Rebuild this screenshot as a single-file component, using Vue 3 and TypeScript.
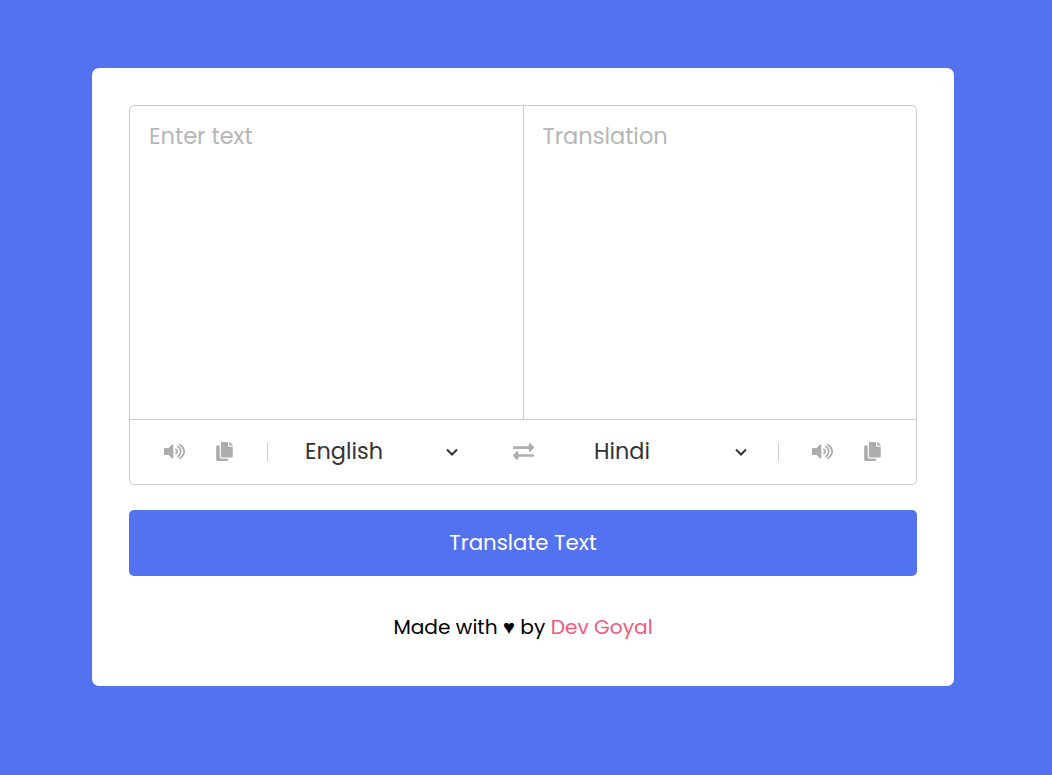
<template>
  <div class="page">
    <div class="card">
      <div class="box">
        <div class="panes">
          <div class="pane pane-left"><span class="placeholder">Enter text</span></div>
          <div class="pane"><span class="placeholder">Translation</span></div>
        </div>
        <div class="controls">
          <div class="icons icons-left">
            <svg class="ic" viewBox="0 0 576 512"><path :d="volume" /></svg>
            <svg class="ic copy" viewBox="0 0 448 512"><path :d="copy" /></svg>
          </div>
          <div class="lang lang-from">
            <span class="lang-name">English</span>
            <svg class="chev" viewBox="0 0 12 8"><path d="M1 1.5l5 5 5-5" /></svg>
          </div>
          <svg class="swap" viewBox="0 0 512 512"><path :d="exchange" /></svg>
          <div class="lang lang-to">
            <span class="lang-name">Hindi</span>
            <svg class="chev" viewBox="0 0 12 8"><path d="M1 1.5l5 5 5-5" /></svg>
          </div>
          <div class="icons icons-right">
            <svg class="ic" viewBox="0 0 576 512"><path :d="volume" /></svg>
            <svg class="ic copy" viewBox="0 0 448 512"><path :d="copy" /></svg>
          </div>
        </div>
      </div>
      <button class="translate">Translate Text</button>
      <p class="credit">Made with ♥ by <a class="author">Dev Goyal</a></p>
    </div>
  </div>
</template>

<script setup lang="ts">
const volume =
  'M215 71L126 160H24c-13 0-24 11-24 24v144c0 13 11 24 24 24h102l89 89c15 15 41 4 41-17V88c0-21-26-32-41-17zm233-21c-11-7-26-4-33 8-7 11-4 26 8 33 66 43 105 115 105 165s-39 122-105 165c-12 7-15 22-8 33 7 12 22 15 33 8 80-52 128-111 128-206S528 102 448 50zm32 206c0-63-32-121-85-155-11-7-26-4-33 8-7 11-3 26 8 33 39 25 62 68 62 114s-23 89-62 114c-11 7-15 22-8 33 7 12 22 15 33 8 53-34 85-92 85-155zm-142-77c-12-6-26-2-33 9-6 12-2 27 10 33 13 7 21 21 21 35s-8 28-21 35c-12 6-16 21-10 33 7 11 21 16 33 9 29-16 46-45 46-77s-17-61-46-77z'
const copy =
  'M320 448v40c0 13-11 24-24 24H24c-13 0-24-11-24-24V120c0-13 11-24 24-24h72v296c0 31 25 56 56 56h168zm0-344V0H152c-13 0-24 11-24 24v368c0 13 11 24 24 24h272c13 0 24-11 24-24V128H344c-13 0-24-11-24-24zm121-31L375 7c-4-4-11-7-17-7h-6v96h96v-6c0-6-3-13-7-17z'
const exchange =
  'M0 168v-16c0-13 11-24 24-24h360V80c0-21 26-32 41-17l80 80c9 9 9 25 0 34l-80 80c-15 15-41 4-41-17v-48H24c-13 0-24-11-24-24zm488 152H128v-48c0-21-26-32-41-17L7 335c-9 9-9 25 0 34l80 80c15 15 41 4 41-17v-48h360c13 0 24-11 24-24v-16c0-13-11-24-24-24z'
</script>

<style>
html,
body {
  margin: 0;
}
</style>

<style scoped>
.page {
  box-sizing: border-box;
  height: 775px;
  background: #5372f0;
  padding: 68px 6px 0 0;
  display: flex;
  justify-content: center;
  align-items: flex-start;
  font-family: Poppins, 'Open Sans', sans-serif;
}
.card {
  box-sizing: border-box;
  width: 862px;
  height: 618px;
  padding: 37px 37px 0;
  background: #fff;
  border-radius: 7px;
}
.box {
  box-sizing: border-box;
  height: 380px;
  border: 1px solid #ccc;
  border-radius: 5px;
  display: flex;
  flex-direction: column;
}
.panes {
  display: flex;
  height: 313px;
  border-bottom: 1px solid #ccc;
}
.pane {
  flex: 1;
  padding: 16px 19px;
  font-size: 22.5px;
  line-height: 29px;
}
.pane-left {
  border-right: 1px solid #ccc;
}
.placeholder {
  color: #b7b6b6;
}
.controls {
  flex: 1;
  display: flex;
  align-items: center;
  padding-bottom: 1px;
}
.icons {
  display: flex;
  align-items: center;
  gap: 31px;
  height: 18px;
}
.icons-left {
  padding-left: 34px;
  padding-right: 34px;
  border-right: 1px solid #ccc;
}
.icons-right {
  padding-left: 33px;
  border-left: 1px solid #ccc;
}
.ic {
  width: 21px;
  height: 19px;
  fill: #adadad;
}
.ic.copy {
  width: 17px;
  height: 19px;
}
.lang {
  display: flex;
  align-items: center;
  justify-content: space-between;
  font-size: 22.4px;
  color: #333;
}
.lang-name {
  margin-bottom: 2px;
}
.lang-from {
  width: 153px;
  margin-left: 37px;
}
.lang-to {
  width: 153px;
  margin-left: 60px;
  margin-right: 31px;
}
.chev {
  width: 12px;
  height: 8px;
  fill: none;
  stroke: #333;
  stroke-width: 2;
}
.swap {
  width: 21px;
  height: 21px;
  margin-left: 55px;
  fill: #adadad;
}
.translate {
  display: block;
  width: 100%;
  height: 66px;
  margin-top: 25px;
  padding: 0 0 2px;
  border: 0;
  border-radius: 5px;
  background: #5372f0;
  color: #fff;
  font: inherit;
  font-size: 21.3px;
}
.credit {
  margin: 36px 0 0;
  text-align: center;
  font-size: 20.16px;
  line-height: 30px;
  color: #000;
}
.author {
  color: #f15a7a;
}
</style>
